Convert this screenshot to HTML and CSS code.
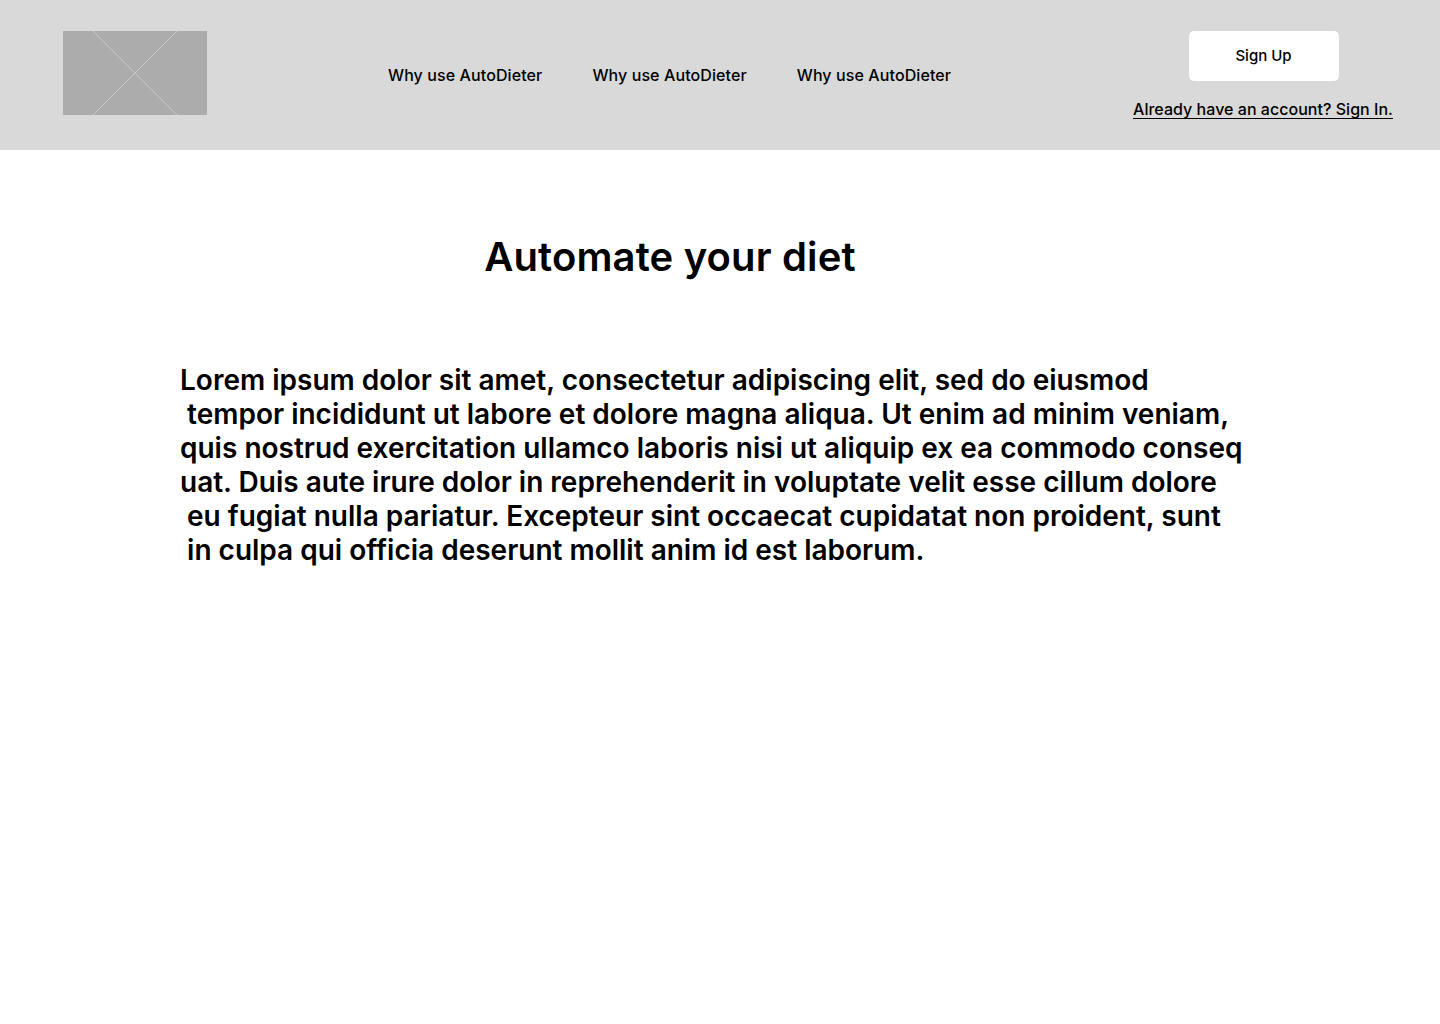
FILE: index.html
```html
<!DOCTYPE html>
<html lang="en">
<head>
<meta charset="utf-8">
<title>AutoDieter</title>
<link rel="stylesheet" href="styles.css">
</head>
<body>
<header class="header">
  <div class="logo">
    <svg class="logo-x" viewBox="0 0 144 84" width="144" height="84" aria-hidden="true">
      <line x1="30" y1="0" x2="114" y2="84" stroke="#c9c9c9" stroke-width="1"/>
      <line x1="114" y1="0" x2="30" y2="84" stroke="#c9c9c9" stroke-width="1"/>
    </svg>
  </div>
  <nav class="nav">
    <a class="nav-link" href="#">Why use AutoDieter</a>
    <a class="nav-link" href="#">Why use AutoDieter</a>
    <a class="nav-link" href="#">Why use AutoDieter</a>
  </nav>
  <div class="account">
    <a class="signup" href="#">Sign Up</a>
    <a class="signin" href="#">Already have an account? Sign In.</a>
  </div>
</header>
<main class="main">
  <h1 class="title">Automate your diet</h1>
  <p class="body-text"><span class="line">Lorem ipsum dolor sit amet, consectetur adipiscing elit, sed do eiusmod</span><span class="line"> tempor incididunt ut labore et dolore magna aliqua. Ut enim ad minim veniam,</span><span class="line">quis nostrud exercitation ullamco laboris nisi ut aliquip ex ea commodo conseq</span><span class="line">uat. Duis aute irure dolor in reprehenderit in voluptate velit esse cillum dolore</span><span class="line"> eu fugiat nulla pariatur. Excepteur sint occaecat cupidatat non proident, sunt</span><span class="line"> in culpa qui officia deserunt mollit anim id est laborum.</span></p>
</main>
</body>
</html>
```

FILE: styles.css
```css
* { box-sizing: border-box; }
html, body { margin: 0; padding: 0; }
body {
  font-family: Inter, "Noto Sans", sans-serif;
  color: #000;
  background: #fff;
  width: 1440px;
  min-height: 1024px;
}
a { color: #000; text-decoration: none; }

.header {
  height: 150px;
  background: #d9d9d9;
  display: flex;
  align-items: flex-start;
  padding: 31px 47px 0 63px;
}
.logo {
  width: 144px;
  height: 84px;
  background: #acacac;
  flex: none;
}
.logo-x { display: block; }

.nav {
  display: flex;
  gap: 50px;
  margin-left: 181px;
  margin-top: 33px;
}
.nav-link {
  font-size: 16px;
  font-weight: 500;
  line-height: 22px;
  letter-spacing: 0.1px;
}

.account {
  margin-left: auto;
  display: flex;
  flex-direction: column;
  align-items: center;
}
.signup {
  width: 150px;
  height: 50px;
  padding-bottom: 1px;
  background: #fff;
  border-radius: 5px;
  display: flex;
  align-items: center;
  justify-content: center;
  font-size: 15px;
  font-weight: 500;
  margin-left: 1px;
}
.signin {
  margin-top: 17px;
  font-size: 16px;
  font-weight: 500;
  line-height: 22px;
  letter-spacing: 0.03px;
  text-decoration: underline;
  text-underline-offset: 3px;
}

.main {
  width: 980px;
  margin-left: 180px;
  padding-top: 83px;
}
.title {
  margin: 0;
  text-align: center;
  font-size: 40px;
  font-weight: 600;
  line-height: 48px;
  letter-spacing: 0.15px;
}
.body-text {
  margin: 82px 0 0;
  font-size: 28px;
  font-weight: 600;
  line-height: 34px;
}
.line {
  display: block;
  white-space: pre;
}
```
